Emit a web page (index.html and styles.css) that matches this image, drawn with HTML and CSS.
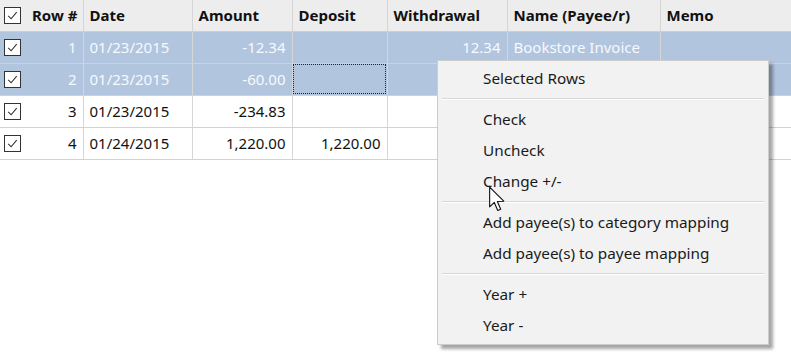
FILE: index.html
```html
<!DOCTYPE html>
<html lang="en">
<head>
    <meta charset="UTF-8">
    <title>Transactions</title>
    <link rel="stylesheet" href="styles.css">
</head>
<body>
    <div class="grid-wrap">
        <table class="grid">
            <colgroup>
                <col class="c-check">
                <col class="c-row">
                <col class="c-date">
                <col class="c-amount">
                <col class="c-deposit">
                <col class="c-withdrawal">
                <col class="c-name">
                <col class="c-memo">
            </colgroup>
            <thead>
                <tr>
                    <th class="chk"><span class="box"><svg viewBox="0 0 16 16"><path d="M3.5 8.5 L6.5 11.5 L12.5 4.5"/></svg></span></th>
                    <th class="rownum">Row #</th>
                    <th>Date</th>
                    <th>Amount</th>
                    <th>Deposit</th>
                    <th>Withdrawal</th>
                    <th>Name (Payee/r)</th>
                    <th>Memo</th>
                </tr>
            </thead>
            <tbody>
                <tr class="selected">
                    <td class="chk"><span class="box"><svg viewBox="0 0 16 16"><path d="M3.5 8.5 L6.5 11.5 L12.5 4.5"/></svg></span></td>
                    <td class="num">1</td>
                    <td>01/23/2015</td>
                    <td class="num">-12.34</td>
                    <td class="num"></td>
                    <td class="num">12.34</td>
                    <td>Bookstore Invoice</td>
                    <td></td>
                </tr>
                <tr class="selected">
                    <td class="chk"><span class="box"><svg viewBox="0 0 16 16"><path d="M3.5 8.5 L6.5 11.5 L12.5 4.5"/></svg></span></td>
                    <td class="num">2</td>
                    <td>01/23/2015</td>
                    <td class="num">-60.00</td>
                    <td class="num focus"></td>
                    <td class="num"></td>
                    <td></td>
                    <td></td>
                </tr>
                <tr>
                    <td class="chk"><span class="box"><svg viewBox="0 0 16 16"><path d="M3.5 8.5 L6.5 11.5 L12.5 4.5"/></svg></span></td>
                    <td class="num">3</td>
                    <td>01/23/2015</td>
                    <td class="num">-234.83</td>
                    <td class="num"></td>
                    <td class="num"></td>
                    <td></td>
                    <td></td>
                </tr>
                <tr>
                    <td class="chk"><span class="box"><svg viewBox="0 0 16 16"><path d="M3.5 8.5 L6.5 11.5 L12.5 4.5"/></svg></span></td>
                    <td class="num">4</td>
                    <td>01/24/2015</td>
                    <td class="num">1,220.00</td>
                    <td class="num">1,220.00</td>
                    <td class="num"></td>
                    <td></td>
                    <td></td>
                </tr>
            </tbody>
        </table>

        <!-- Right-click menu over the grid -->
        <div class="context-menu">
            <div class="item">Selected Rows</div>
            <div class="sep"></div>
            <div class="item">Check</div>
            <div class="item">Uncheck</div>
            <div class="item">Change +/-</div>
            <div class="sep"></div>
            <div class="item">Add payee(s) to category mapping</div>
            <div class="item">Add payee(s) to payee mapping</div>
            <div class="sep"></div>
            <div class="item">Year +</div>
            <div class="item">Year -</div>
        </div>

        <svg class="cursor" viewBox="0 0 14 22" width="18" height="27">
            <path d="M1 1 L1 17 L4.8 13.4 L7.6 20 L10 19 L7.3 12.6 L12.5 12.4 Z"/>
        </svg>
    </div>
</body>
</html>
```

FILE: styles.css
```css
body {
    margin: 0;
    padding: 0;
    background-color: #fff;
    font-family: "Noto Sans", "Open Sans", Arial, sans-serif;
    font-size: 15px;
    color: #111;
}

.grid-wrap {
    position: relative;
    width: 791px;
    height: 364px;
    overflow: hidden;
}

.grid {
    border-collapse: collapse;
    table-layout: fixed;
    width: 791px;
}

.c-check { width: 28px; }
.c-row { width: 55px; }
.c-date { width: 109px; }
.c-amount { width: 100px; }
.c-deposit { width: 95px; }
.c-withdrawal { width: 120px; }
.c-name { width: 153px; }
.c-memo { width: 131px; }

.grid th {
    background-color: #ededed;
    height: 31px;
    padding: 0 6px;
    text-align: left;
    font-weight: 700;
    font-size: 15px;
    border-right: 1px solid #d6d6d6;
    border-bottom: 1px solid #cfcfcf;
    white-space: nowrap;
    box-sizing: border-box;
}

.grid td {
    height: 32px;
    padding: 0 6px;
    border-right: 1px solid #d6d6d6;
    border-bottom: 1px solid #d2d2d2;
    white-space: nowrap;
    box-sizing: border-box;
}

.grid th.chk,
.grid td.chk {
    padding: 0 0 0 4px;
    border-right: none;
}

.grid th.rownum {
    padding-left: 4px;
}

.grid td.num {
    text-align: right;
}

.grid tr.selected td {
    background-color: #b1c5df;
    color: #f7f9fc;
}

.grid td.focus {
    outline: 1px dotted #222;
    outline-offset: -2px;
}

.box {
    display: block;
    width: 15px;
    height: 15px;
    border: 1px solid #333;
    background-color: #fff;
}

.box svg {
    display: block;
    width: 15px;
    height: 15px;
    fill: none;
    stroke: #333;
    stroke-width: 1.2;
}

.context-menu {
    position: absolute;
    left: 437px;
    top: 60px;
    width: 330px;
    padding: 2px 0 3px;
    background-color: #f2f2f2;
    border: 1px solid #cccccc;
    box-shadow: 4px 4px 3px rgba(0, 0, 0, 0.35);
    color: #1a1a1a;
    font-size: 15.3px;
}

.context-menu .item {
    height: 31px;
    line-height: 31px;
    padding-left: 45px;
}

.context-menu .sep {
    height: 1px;
    margin: 4px 4px 4px 4px;
    background-color: #d8d8d8;
    border-bottom: 1px solid #fff;
}

.cursor {
    position: absolute;
    left: 488px;
    top: 186px;
}

.cursor path {
    fill: #fff;
    stroke: #111;
    stroke-width: 0.9;
    stroke-linejoin: round;
}
```
